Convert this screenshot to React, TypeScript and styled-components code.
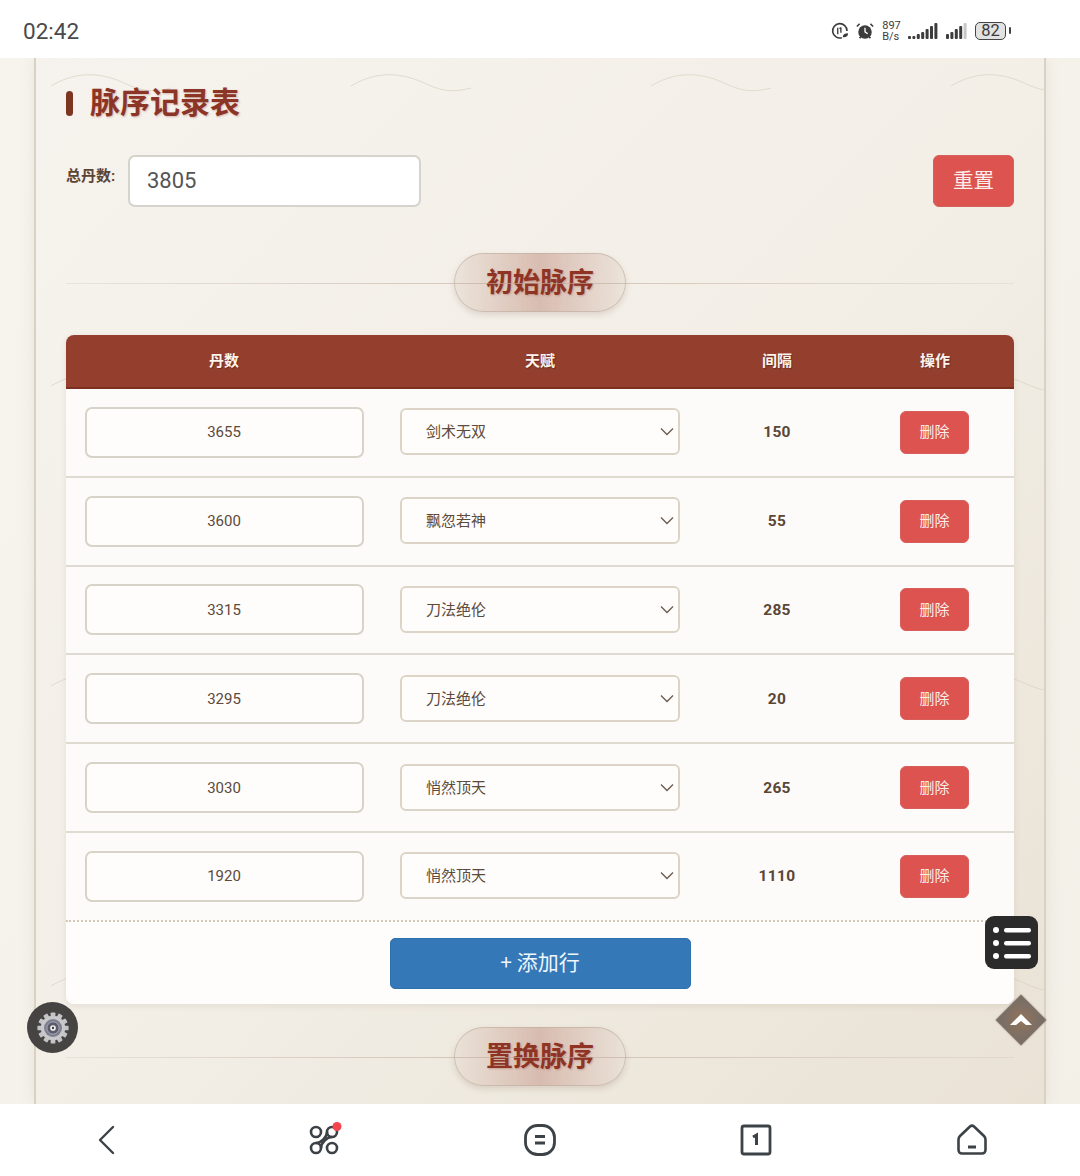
import { createGlobalStyle, styled } from 'styled-components'

const TALENTS = ['剑术无双', '飘忽若神', '刀法绝伦', '悄然顶天']

const ROWS = [
  { pills: '3655', talent: '剑术无双', gap: 150 },
  { pills: '3600', talent: '飘忽若神', gap: 55 },
  { pills: '3315', talent: '刀法绝伦', gap: 285 },
  { pills: '3295', talent: '刀法绝伦', gap: 20 },
  { pills: '3030', talent: '悄然顶天', gap: 265 },
  { pills: '1920', talent: '悄然顶天', gap: 1110 },
]

const wave = encodeURIComponent(
  `<svg xmlns="http://www.w3.org/2000/svg" width="300" height="300"><path d="M15 28C35 16 55 14 75 20S105 38 135 30" fill="none" stroke="#d9d0bf" stroke-width="1" opacity="0.7"/></svg>`,
)

const GlobalStyle = createGlobalStyle`
  html, body {
    margin: 0;
    padding: 0;
    background: #fff;
  }
  * {
    box-sizing: border-box;
  }
  body {
    font-family: Roboto, "Noto Sans CJK SC", sans-serif;
  }
`

const Screen = styled.div`
  width: 1080px;
  height: 1176px;
  display: flex;
  flex-direction: column;
  overflow: hidden;
  position: relative;
`

const StatusBar = styled.header`
  height: 58px;
  flex: none;
  background: #fff;
  display: flex;
  align-items: center;
  justify-content: space-between;
  padding: 4px 74px 0 23px;
`

const Clock = styled.span`
  font-size: 22.5px;
  color: #4a4a4a;
`

const StatusIcons = styled.div`
  display: flex;
  align-items: center;
  gap: 7px;
  color: #3c3c3c;
`

const Speed = styled.span`
  font-size: 11px;
  line-height: 11px;
  width: 19px;
  margin-left: 1px;
`

const Battery = styled.span`
  width: 31px;
  height: 18px;
  border: 1.5px solid #444;
  border-radius: 5px;
  background: #e2e2e2;
  font-size: 16.5px;
  line-height: 15px;
  text-align: center;
  position: relative;
  &::after {
    content: '';
    position: absolute;
    right: -6px;
    top: 4px;
    width: 2px;
    height: 7px;
    border-radius: 1px;
    background: #444;
  }
`

const Viewport = styled.main`
  flex: 1;
  min-height: 0;
  background: linear-gradient(135deg, #f7f4ed, #f3f0e8);
  padding: 0 34px;
  overflow: hidden;
`

const Card = styled.section`
  height: 100%;
  padding: 0 30px;
  border: solid #d8d2c5;
  border-width: 0 2px;
  background: url("data:image/svg+xml,${wave}") 0 0 / 300px 300px,
    linear-gradient(135deg, #f6f2ed 0%, #f3efe7 50%, #e9e2d5 100%);
  box-shadow: 0 0 14px rgba(120, 100, 70, 0.1);
`

const Title = styled.h1`
  margin: 0;
  padding-top: 27px;
  height: 97px;
  display: flex;
  align-items: flex-start;
  gap: 17px;
  font-size: 30px;
  line-height: 36px;
  font-weight: 700;
  color: #8c3527;
  text-shadow: 1px 1px 2px rgba(140, 53, 39, 0.3);
  &::before {
    content: '';
    width: 7px;
    height: 25px;
    margin-top: 6px;
    border-radius: 4px;
    background: #7c3620;
  }
`

const TotalRow = styled.div`
  display: flex;
  align-items: flex-start;
  height: 98px;
`

const TotalLabel = styled.label`
  width: 62px;
  padding-top: 11px;
  font-size: 15px;
  line-height: 20px;
  font-weight: 700;
  color: #5c4433;
  white-space: nowrap;
`

const TotalInput = styled.input`
  width: 293px;
  height: 52px;
  padding: 0 17px 2px;
  border: 2px solid #d6d3cd;
  border-radius: 7px;
  background: #fff;
  font: 22px Roboto, sans-serif;
  color: #555;
  outline: none;
`

const ResetButton = styled.button`
  width: 81px;
  height: 52px;
  margin-left: auto;
  padding: 0 0 4px;
  border: 1px solid #d4625c;
  border-radius: 6px;
  background: #dc5350;
  color: #fbeeea;
  font: 20.5px "Noto Sans CJK SC", sans-serif;
`

const SectionHeading = styled.div`
  height: 59px;
  display: flex;
  justify-content: center;
  position: relative;
  &::after {
    content: '';
    position: absolute;
    left: 0;
    right: 0;
    top: 30px;
    height: 1px;
    background: linear-gradient(90deg, rgba(200, 185, 170, 0.25), rgba(190, 170, 155, 0.65) 50%, rgba(200, 185, 170, 0.25));
  }
`

const SectionPill = styled.h2`
  margin: 0;
  width: 172px;
  height: 59px;
  border: 1.5px solid rgba(190, 175, 160, 0.65);
  border-radius: 30px;
  background: linear-gradient(90deg, rgba(232, 222, 212, 0.7), rgba(213, 182, 170, 0.9) 50%, rgba(232, 222, 212, 0.7));
  box-shadow: 0 3px 6px rgba(120, 90, 70, 0.18);
  font-size: 27px;
  line-height: 58px;
  font-weight: 700;
  text-align: center;
  color: #8f3425;
  text-shadow: 1px 1px 2px rgba(140, 53, 39, 0.3);
  position: relative;
`

const RecordTable = styled.div`
  margin-top: 23px;
  margin-bottom: 23px;
  border-radius: 8px;
  overflow: hidden;
  background: #fdfbf9;
  box-shadow: 0 2px 6px rgba(120, 100, 70, 0.12);
`

const HeadRow = styled.div`
  display: grid;
  grid-template-columns: 2fr 2fr 1fr 1fr;
  height: 54px;
  padding-bottom: 3px;
  align-items: center;
  background: #943f2e;
  border-bottom: 2px solid #7d3020;
  color: #fbf3ec;
  font-size: 15px;
  font-weight: 700;
  text-align: center;
  text-shadow: 1px 1px 1px rgba(60, 20, 10, 0.45);
`

const BodyRow = styled.div<{ $last?: boolean }>`
  display: grid;
  grid-template-columns: 2fr 2fr 1fr 1fr;
  height: 88.8px;
  align-items: center;
  justify-items: center;
  border-bottom: 2px ${(p) => (p.$last ? 'dotted #d3c8b8' : 'solid #e0dbd2')};
`

const PillInput = styled.input`
  width: 279px;
  height: 51px;
  border: 2px solid #d8d3c8;
  border-radius: 7px;
  background: #fefdfb;
  font: 15px Roboto, sans-serif;
  color: #5c4a3c;
  text-align: center;
  outline: none;
`

const SelectWrap = styled.div`
  width: 280px;
  height: 47px;
  margin-top: -1px;
  position: relative;
  color: #6a5a4e;
`

const TalentSelect = styled.select`
  width: 100%;
  height: 100%;
  padding: 0 24px 2px;
  appearance: none;
  border: 2px solid #dcd4c6;
  border-radius: 6px;
  background: #fefdfb;
  font: 15px "Noto Sans CJK SC", sans-serif;
  color: #5c4a3c;
  outline: none;
`

const Chevron = styled.svg`
  position: absolute;
  right: 6px;
  top: 19px;
  pointer-events: none;
`

const GapValue = styled.span`
  font-size: 15.5px;
  font-weight: 700;
  letter-spacing: 0.3px;
  color: #5a4636;
`

const DeleteButton = styled.button`
  width: 69px;
  height: 43px;
  margin-left: -1px;
  padding: 0 0 3px;
  border: 1px solid #d65f5b;
  border-radius: 6px;
  background: #dc5350;
  color: #fbeeea;
  font: 15px "Noto Sans CJK SC", sans-serif;
`

const AddArea = styled.div`
  height: 82px;
  padding-top: 16px;
  display: flex;
  justify-content: center;
  background: #fefdfb;
`

const AddButton = styled.button`
  width: 301px;
  height: 51px;
  padding: 0 0 4px;
  border: 1px solid #2f70ad;
  border-radius: 5px;
  background: #3478b8;
  color: #eef5fb;
  font: 21px "Noto Sans CJK SC", sans-serif;
`

const NavBar = styled.nav`
  height: 72px;
  flex: none;
  background: #fff;
  display: grid;
  grid-template-columns: repeat(5, 216px);
  color: #3c4246;
`

const NavItem = styled.div`
  display: flex;
  align-items: center;
  justify-content: center;
`

const FloatGear = styled.div`
  position: absolute;
  left: 27px;
  top: 1002px;
  width: 51px;
  height: 51px;
  border-radius: 50%;
  background: #464442;
  display: flex;
  align-items: center;
  justify-content: center;
`

const FloatList = styled.div`
  position: absolute;
  left: 985px;
  top: 916px;
  width: 53px;
  height: 53px;
  border-radius: 9px;
  background: #2b2b2b;
  display: flex;
  align-items: center;
  justify-content: center;
`

const FloatTop = styled.div`
  position: absolute;
  left: 1003px;
  top: 1002px;
  width: 36px;
  height: 36px;
  transform: rotate(45deg);
  background: radial-gradient(circle, #93735a, #7b6f65 70%);
  box-shadow: 0 0 2px rgba(80, 60, 40, 0.4);
  display: flex;
  align-items: center;
  justify-content: center;
`

const TopArrow = styled.svg`
  transform: rotate(-45deg);
`

function Gear() {
  const teeth = Array.from({ length: 12 }, (_, i) => i * 30)
  return (
    <svg width="34" height="34" viewBox="0 0 36 36">
      {teeth.map((deg) => (
        <rect key={deg} x="15.5" y="1.5" width="5" height="6" rx="1" fill="#c4c4c6" transform={`rotate(${deg} 18 18)`} />
      ))}
      <circle cx="18" cy="18" r="13" fill="#c9c9cb" />
      <circle cx="18" cy="18" r="9.5" fill="#7d7f90" />
      <circle cx="18" cy="18" r="6.5" fill="#5a5c6a" stroke="#a9abb8" strokeWidth="1" />
      <circle cx="18" cy="18" r="3" fill="#f1f1f1" />
      <circle cx="18" cy="18" r="1.2" fill="#333" />
    </svg>
  )
}

function SignalBars({ heights, faded }: { heights: number[]; faded?: boolean }) {
  const step = 4.4
  return (
    <svg width={heights.length * step} height="16" viewBox={`0 0 ${heights.length * step} 16`}>
      {heights.map((h, i) => (
        <rect
          key={i}
          x={i * step}
          y={16 - h}
          width="3"
          height={h}
          rx="1"
          fill={faded && i === heights.length - 1 ? '#c8c8c8' : 'currentColor'}
        />
      ))}
    </svg>
  )
}

export default function App() {
  return (
    <Screen>
      <GlobalStyle />
      <StatusBar>
        <Clock>02:42</Clock>
        <StatusIcons>
          <svg width="18" height="18" viewBox="0 0 20 20" fill="none" stroke="currentColor" strokeWidth="1.8">
            <path d="M12 17.500A8 8 0 1 1 17.800 10" />
            <path d="M7.500 6.500v7M11 6v6M11 6l-1.500 1.500" strokeWidth="1.5" />
            <path d="M13 17c0-3 2-4.500 6-4.500 0 3-2 5-6 4.500z" fill="currentColor" stroke="none" />
          </svg>
          <svg width="18" height="18" viewBox="0 0 20 20">
            <circle cx="10" cy="11" r="7.500" fill="currentColor" />
            <path d="M10 6.500V11l3 2" fill="none" stroke="#fff" strokeWidth="1.500" />
            <path d="M1 5l3-3M19 5l-3-3M4 18l1.500-2M16 18l-1.500-2" stroke="currentColor" strokeWidth="1.800" />
          </svg>
          <Speed>
            897
            <br />
            B/s
          </Speed>
          <SignalBars heights={[3, 3, 5, 7, 10, 13, 16]} />
          <SignalBars heights={[5, 7, 10, 13, 16]} faded />
          <Battery>82</Battery>
        </StatusIcons>
      </StatusBar>

      <Viewport>
        <Card>
          <Title>脉序记录表</Title>
          <TotalRow>
            <TotalLabel>总丹数:</TotalLabel>
            <TotalInput defaultValue="3805" />
            <ResetButton>重置</ResetButton>
          </TotalRow>
          <SectionHeading>
            <SectionPill>初始脉序</SectionPill>
          </SectionHeading>
          <RecordTable>
            <HeadRow>
              <span>丹数</span>
              <span>天赋</span>
              <span>间隔</span>
              <span>操作</span>
            </HeadRow>
            {ROWS.map((row, i) => (
              <BodyRow key={row.pills} $last={i === ROWS.length - 1}>
                <PillInput defaultValue={row.pills} />
                <SelectWrap>
                  <TalentSelect defaultValue={row.talent}>
                    {TALENTS.map((t) => (
                      <option key={t}>{t}</option>
                    ))}
                  </TalentSelect>
                  <Chevron width="14" height="9" viewBox="0 0 14 9" fill="none" stroke="currentColor" strokeWidth="1.300">
                    <path d="M1 1.500l6 6 6-6" />
                  </Chevron>
                </SelectWrap>
                <GapValue>{row.gap}</GapValue>
                <DeleteButton>删除</DeleteButton>
              </BodyRow>
            ))}
            <AddArea>
              <AddButton>+ 添加行</AddButton>
            </AddArea>
          </RecordTable>
          <SectionHeading>
            <SectionPill>置换脉序</SectionPill>
          </SectionHeading>
        </Card>
      </Viewport>

      <NavBar>
        <NavItem>
          <svg width="32" height="32" viewBox="0 0 32 32" fill="none" stroke="currentColor" strokeWidth="2.400">
            <path d="M22 3L9 16l13 13" strokeLinecap="round" strokeLinejoin="round" transform="translate(-1 0)" />
          </svg>
        </NavItem>
        <NavItem>
          <svg width="36" height="36" viewBox="0 0 36 36" fill="none" stroke="currentColor" strokeWidth="2.600">
            <circle cx="10" cy="10" r="5" />
            <circle cx="26" cy="26" r="5" />
            <circle cx="10" cy="26" r="5" />
            <circle cx="26" cy="10" r="5" />
            <path d="M10 21c5 0 11-6 11-11M15 26c0-5 6-11 11-11" />
            <circle cx="31" cy="4.500" r="4.500" fill="#f4444e" stroke="none" />
          </svg>
        </NavItem>
        <NavItem>
          <svg width="32" height="32" viewBox="0 0 32 32" fill="none" stroke="currentColor" strokeWidth="2.800">
            <rect x="1.500" y="1.500" width="29" height="29" rx="12" />
            <path d="M11 12.500h10M11 19h10" strokeWidth="3" />
          </svg>
        </NavItem>
        <NavItem>
          <svg width="32" height="32" viewBox="0 0 32 32" fill="none" stroke="currentColor" strokeWidth="2.800">
            <rect x="2" y="2" width="28" height="28" rx="2" />
            <path d="M13 13l3.500-2v10" strokeWidth="3" />
          </svg>
        </NavItem>
        <NavItem>
          <svg width="32" height="32" viewBox="0 0 32 32" fill="none" stroke="currentColor" strokeWidth="2.600">
            <path
              d="M14 2.500a3 3 0 0 1 4 0L28 12a5 5 0 0 1 1.500 3.500V26a3.500 3.500 0 0 1-3.500 3.500H6A3.500 3.500 0 0 1 2.500 26V15.500A5 5 0 0 1 4 12z"
              strokeLinejoin="round"
            />
            <path d="M12 23h8" strokeWidth="3" />
          </svg>
        </NavItem>
      </NavBar>

      <FloatGear>
        <Gear />
      </FloatGear>
      <FloatList>
        <svg width="38" height="34" viewBox="0 0 38 34" fill="#fff">
          <circle cx="3" cy="4" r="3" />
          <circle cx="3" cy="17" r="3" />
          <circle cx="3" cy="30" r="3" />
          <rect x="11" y="2" width="27" height="4.500" rx="2.200" />
          <rect x="11" y="15" width="27" height="4.500" rx="2.200" />
          <rect x="11" y="28" width="27" height="4.500" rx="2.200" />
        </svg>
      </FloatList>
      <FloatTop>
        <TopArrow width="24" height="14" viewBox="0 0 24 14" fill="#fff">
          <path d="M12 1l11 11h-6l-5-4-5 4H1z" />
        </TopArrow>
      </FloatTop>
    </Screen>
  )
}
